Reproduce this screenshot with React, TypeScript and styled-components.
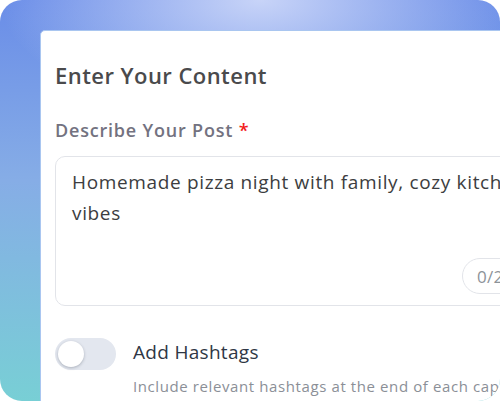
import styled, { createGlobalStyle } from "styled-components";

const GlobalStyle = createGlobalStyle`
  html, body {
    margin: 0;
    padding: 0;
    background: #ffffff;
    overflow: hidden;
  }
  * {
    box-sizing: border-box;
  }
`;

const Frame = styled.div`
  width: 500px;
  height: 401px;
  border-radius: 22px;
  overflow: hidden;
  padding: 30px 0 0 40px;
  background:
    radial-gradient(ellipse 260px 120px at 52% 0%, rgba(200, 212, 248, 1) 0%, rgba(200, 212, 248, 0) 100%),
    linear-gradient(180deg, #6a8de8 0%, #86ade6 45%, #78cfd5 100%);
`;

const Card = styled.div`
  width: 540px;
  height: 420px;
  background: #ffffff;
  border: 1px solid #a9c6f0;
  border-radius: 5px 0 0 0;
  padding: 28px 0 0 14px;
  font-family: "Open Sans", "Lato", sans-serif;
`;

const Title = styled.h2`
  margin: 0;
  font-size: 22px;
  line-height: 32px;
  font-weight: 600;
  letter-spacing: 0.45px;
  color: #4a4a4c;
`;

const Label = styled.div`
  margin-top: 27px;
  font-size: 18px;
  line-height: 24px;
  font-weight: 600;
  letter-spacing: 0.8px;
  color: #737280;

  span {
    color: #f21d1d;
  }
`;

const TextBox = styled.div`
  position: relative;
  margin-top: 14px;
  width: 520px;
  height: 150px;
  border: 1px solid #e2e4e9;
  border-radius: 10px;
  padding: 10px 16px;
  font-size: 19px;
  line-height: 31px;
  letter-spacing: 0.65px;
  color: #3c3d40;
`;

const Counter = styled.div`
  position: absolute;
  left: 406px;
  top: 101px;
  height: 36px;
  padding: 0 14px;
  border: 1px solid #e2e4e9;
  border-radius: 18px;
  display: flex;
  align-items: center;
  font-size: 17px;
  letter-spacing: 0.3px;
  color: #8d9399;
`;

const OptionRow = styled.div`
  margin-top: 32px;
  display: flex;
  align-items: flex-start;
  gap: 17px;
`;

const Toggle = styled.div`
  width: 61px;
  height: 32px;
  border-radius: 16px;
  background: #e3e7ef;
  padding: 3px;
  flex-shrink: 0;
`;

const Knob = styled.div`
  width: 26px;
  height: 26px;
  border-radius: 50%;
  background: #ffffff;
  box-shadow: 0 1px 3px rgba(40, 50, 70, 0.3);
`;

const OptionText = styled.div`
  display: flex;
  flex-direction: column;
`;

const OptionTitle = styled.div`
  font-size: 19px;
  line-height: 28px;
  letter-spacing: 0.3px;
  color: #2f3745;
`;

const OptionHint = styled.div`
  margin-top: 10px;
  font-size: 15px;
  line-height: 20px;
  letter-spacing: 0.6px;
  color: #8b8f97;
  white-space: nowrap;
`;

export default function App() {
  return (
    <>
      <GlobalStyle />
      <Frame>
        <Card>
          <Title>Enter Your Content</Title>
          <Label>
            Describe Your Post <span>*</span>
          </Label>
          <TextBox>
            Homemade pizza night with family, cozy kitchen
            <br />
            vibes
            <Counter>0/2200</Counter>
          </TextBox>
          <OptionRow>
            <Toggle>
              <Knob />
            </Toggle>
            <OptionText>
              <OptionTitle>Add Hashtags</OptionTitle>
              <OptionHint>Include relevant hashtags at the end of each caption</OptionHint>
            </OptionText>
          </OptionRow>
        </Card>
      </Frame>
    </>
  );
}
